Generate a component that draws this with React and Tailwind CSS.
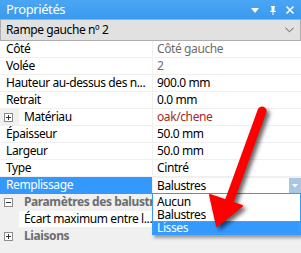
import React from "react";

const rows = [
  { label: "Côté", value: "Côté gauche", tone: "ro" },
  { label: "Volée", value: "2", tone: "ro" },
  { label: "Hauteur au-dessus des n...", value: "900.0 mm" },
  { label: "Retrait", value: "0.0 mm" },
  { label: "Matériau", value: "oak/chene", tone: "mat", expand: "plus" },
  { label: "Épaisseur", value: "50.0 mm" },
  { label: "Largeur", value: "50.0 mm" },
  { label: "Type", value: "Cintré" },
];

function Box({ sign }) {
  return (
    <span className="w-[9px] h-[9px] border border-[#8c8c8c] bg-white flex items-center justify-center relative">
      <span className="absolute w-[5px] h-px bg-[#333]" />
      {sign === "plus" && <span className="absolute w-px h-[5px] bg-[#333]" />}
    </span>
  );
}

function Row({ label, value, tone, expand }) {
  const valueColor =
    tone === "ro" ? "text-[#6d6d6d]" : tone === "mat" ? "text-[#a52a2a]" : "text-black";
  return (
    <div className="flex h-[17px] border-b border-[#f0f0f0]">
      {expand ? (
        <div className="w-[152px] flex shrink-0">
          <div className="w-[19px] bg-[#f0f0f0] flex items-center pl-[4px]">
            <Box sign={expand} />
          </div>
          <div className="bg-white flex-1 pl-[5px] leading-[16px]">{label}</div>
        </div>
      ) : (
        <div className="w-[152px] shrink-0 bg-white pl-[6px] leading-[16px] whitespace-nowrap overflow-hidden">
          {label}
        </div>
      )}
      <div className="w-px bg-[#f0f0f0]" />
      <div className={`flex-1 bg-white pl-[4px] leading-[16px] ${valueColor}`}>{value}</div>
    </div>
  );
}

function Category({ label, sign }) {
  return (
    <div className="flex items-center h-[17px] bg-[#f0f0f0] border-b border-[#f0f0f0]">
      <div className="w-[19px] pl-[4px] flex items-center">
        <Box sign={sign} />
      </div>
      <span className="pl-[5px] font-bold text-[#6d6d6d] whitespace-nowrap">{label}</span>
    </div>
  );
}

export default function App() {
  return (
    <div className="relative w-[301px] h-[253px] overflow-hidden bg-[#f0f0f0] text-[12px] tracking-[-0.4px] text-black font-['Noto_Sans',sans-serif]">
      {/* Title bar */}
      <div className="h-[19px] bg-gradient-to-b from-[#4aa6f4] to-[#3a9aee] flex items-center px-[6px] text-white text-[13px]">
        <span className="flex-1 leading-[19px]">Propriétés</span>
        <svg viewBox="0 0 10 10" className="w-[10px] h-[10px] mr-[8px]">
          <path d="M1 3h8L5 8z" fill="white" />
        </svg>
        <svg viewBox="0 0 10 10" className="w-[10px] h-[10px] mr-[7px]">
          <path d="M3 1h4v1H6.5v4H8v1H5.5v3h-1V7H2V6h1.5V2H3z" fill="white" />
        </svg>
        <svg viewBox="0 0 10 10" className="w-[10px] h-[10px]">
          <path d="M1.5 1.5l7 7M8.5 1.5l-7 7" stroke="white" strokeWidth="1.6" />
        </svg>
      </div>

      {/* Object selector */}
      <div className="h-[22px] bg-[#e1e1e1] border border-[#adadad] flex items-center pl-[5px] pr-[6px]">
        <span className="flex-1 leading-[20px]">Rampe gauche nº 2</span>
        <svg viewBox="0 0 10 6" className="w-[9px] h-[6px]">
          <path d="M0.5 0.5L5 5l4.5-4.5" stroke="#555" fill="none" strokeWidth="1.1" />
        </svg>
      </div>

      {rows.map((r) => (
        <Row key={r.label} {...r} />
      ))}

      {/* Selected row */}
      <div className="flex h-[17px]">
        <div className="w-[152px] shrink-0 bg-[#3399ff] text-white pl-[6px] leading-[16px]">
          Remplissage
        </div>
        <div className="w-px bg-[#f0f0f0]" />
        <div className="flex-1 flex bg-white border-t border-[#f0f0f0]">
          <span className="flex-1 pl-[4px] leading-[15px]">Balustres</span>
          <div className="w-[12px] bg-[#a9c6e4] flex items-center justify-center">
            <svg viewBox="0 0 6 4" className="w-[6px] h-[4px]">
              <path d="M0 0h6L3 3.5z" fill="white" />
            </svg>
          </div>
        </div>
      </div>

      <Category label="Paramètres des balustres" sign="minus" />
      <div className="flex h-[17px] border-b border-[#f0f0f0]">
        <div className="w-[19px] bg-[#f0f0f0]" />
        <div className="w-[133px] bg-white pl-[5px] leading-[16px] whitespace-nowrap">
          Écart maximum entre l...
        </div>
        <div className="w-px bg-[#f0f0f0]" />
        <div className="flex-1 bg-white" />
      </div>
      <Category label="Liaisons" sign="plus" />

      {/* Dropdown list */}
      <div className="absolute left-[152px] top-[193px] w-[149px] border border-[#3399ff] bg-white shadow-[2px_3px_3px_rgba(0,0,0,0.35)] pt-[1px] leading-[13px]">
        <div className="h-[13px] pl-[4px]">Aucun</div>
        <div className="h-[13px] pl-[4px]">Balustres</div>
        <div className="h-[13px] pl-[4px] bg-[#3399ff] text-white outline-1 outline-dotted outline-[#e08030] -outline-offset-1">
          Lisses
        </div>
      </div>

      {/* Red annotation arrow */}
      <svg
        className="absolute left-0 top-0 w-[301px] h-[253px] drop-shadow-[3px_3px_2px_rgba(0,0,0,0.6)]"
        viewBox="0 0 301 253"
      >
        <line x1="262" y1="111" x2="229" y2="202" stroke="#ff0000" strokeWidth="9" strokeLinecap="round" />
        <path d="M217 226L210 195L242 206Z" fill="#ff0000" stroke="#ff0000" strokeWidth="2" strokeLinejoin="round" />
      </svg>
    </div>
  );
}
